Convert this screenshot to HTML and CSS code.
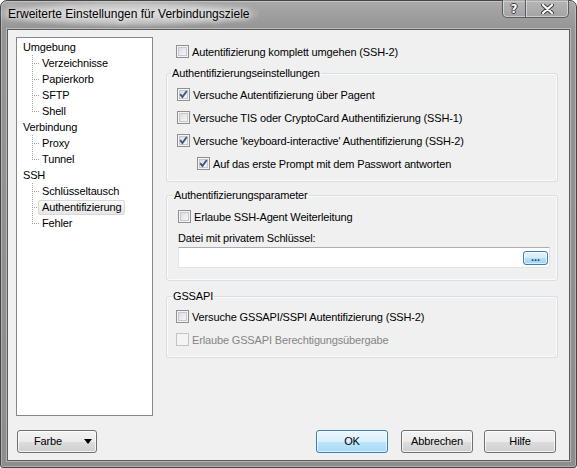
FILE: index.html
```html
<!DOCTYPE html>
<html lang="de">
<head>
<meta charset="utf-8">
<title>Erweiterte Einstellungen für Verbindungsziele</title>
<link rel="stylesheet" href="styles.css">
</head>
<body>
<div class="window">
  <div class="titlebar">
    <span class="title">Erweiterte Einstellungen für Verbindungsziele</span>
    <div class="caption-buttons">
      <span class="cap help">?</span>
      <span class="cap close"><svg width="13" height="10" viewBox="0 0 13 10"><path d="M2 1 L11 9 M11 1 L2 9" stroke="#3a3a3a" stroke-width="4" stroke-linecap="round"/><path d="M2 1 L11 9 M11 1 L2 9" stroke="#fff" stroke-width="2.2" stroke-linecap="round"/></svg></span>
    </div>
  </div>
  <div class="client">
    <div class="main">
      <ul class="tree">
        <li class="root">Umgebung</li>
        <li class="child">Verzeichnisse</li>
        <li class="child">Papierkorb</li>
        <li class="child">SFTP</li>
        <li class="child last">Shell</li>
        <li class="root">Verbindung</li>
        <li class="child">Proxy</li>
        <li class="child last">Tunnel</li>
        <li class="root">SSH</li>
        <li class="child">Schlüsseltausch</li>
        <li class="child"><span class="sel">Authentifizierung</span></li>
        <li class="child last">Fehler</li>
      </ul>
      <div class="panel">
        <div class="row top-row"><span class="cb"></span>Autentifizierung komplett umgehen (SSH-2)</div>
        <fieldset class="group g1">
          <legend>Authentifizierungseinstellungen</legend>
          <div class="row"><span class="cb"><svg width="11" height="11" viewBox="0 0 11 11"><polyline points="2.2,5.2 4.4,8 8.8,2" fill="none" stroke="#3b5486" stroke-width="1.9"/></svg></span>Versuche Autentifizierung über Pagent</div>
          <div class="row"><span class="cb"></span>Versuche TIS oder CryptoCard Authentifizierung (SSH-1)</div>
          <div class="row"><span class="cb"><svg width="11" height="11" viewBox="0 0 11 11"><polyline points="2.2,5.2 4.4,8 8.8,2" fill="none" stroke="#3b5486" stroke-width="1.9"/></svg></span>Versuche 'keyboard-interactive' Authentifizierung (SSH-2)</div>
          <div class="row sub"><span class="cb"><svg width="11" height="11" viewBox="0 0 11 11"><polyline points="2.2,5.2 4.4,8 8.8,2" fill="none" stroke="#3b5486" stroke-width="1.9"/></svg></span>Auf das erste Prompt mit dem Passwort antworten</div>
        </fieldset>
        <fieldset class="group g2">
          <legend>Authentifizierungsparameter</legend>
          <div class="row"><span class="cb"></span>Erlaube SSH-Agent Weiterleitung</div>
          <div class="field-label">Datei mit privatem Schlüssel:</div>
          <div class="edit"><span class="edit-fill"></span><span class="browse">...</span></div>
        </fieldset>
        <fieldset class="group g3">
          <legend>GSSAPI</legend>
          <div class="row"><span class="cb"></span>Versuche GSSAPI/SSPI Autentifizierung (SSH-2)</div>
          <div class="row disabled"><span class="cb"></span>Erlaube GSSAPI Berechtigungsübergabe</div>
        </fieldset>
      </div>
    </div>
    <div class="buttons">
      <span class="btn farbe"><span>Farbe</span><span class="arrow"></span></span>
      <span class="spacer"></span>
      <span class="btn default ok">OK</span>
      <span class="btn cancel">Abbrechen</span>
      <span class="btn hilfe">Hilfe</span>
    </div>
  </div>
</div>
</body>
</html>
```
FILE: styles.css
```css
* { box-sizing: border-box; }
html, body { margin: 0; padding: 0; }
body {
  width: 577px;
  height: 468px;
  overflow: hidden;
  background: #ffffff;
  font-family: "Liberation Sans", Arial, sans-serif;
  font-size: 11px;
  color: #000;
}
.window {
  width: 577px;
  height: 468px;
  border: 1px solid #454545;
  border-radius: 7px 7px 3px 3px;
  background: linear-gradient(to bottom, #a9a9a9 0, #959595 28px, #8d8d8d 100%);
  box-shadow: inset 0 0 0 1px rgba(255,255,255,0.3);
  display: flex;
  flex-direction: column;
}
.titlebar {
  height: 28px;
  flex: none;
  display: flex;
  justify-content: space-between;
  align-items: flex-start;
  padding: 0 7px;
}
.title {
  font-size: 12px;
  line-height: 26px;
  color: #000;
  padding: 0 10px;
  margin-left: -10px;
  background: radial-gradient(ellipse at center, rgba(255,255,255,0.55) 0%, rgba(255,255,255,0.35) 50%, rgba(255,255,255,0) 75%);
  text-shadow: 0 0 6px #fff, 0 0 10px #fff;
}
.caption-buttons {
  margin-top: -1px;
  display: flex;
  height: 18px;
  border: 1px solid #5c5c5c;
  border-top: none;
  border-radius: 0 0 5px 5px;
  box-shadow: inset 0 0 0 1px rgba(255,255,255,0.45);
  background: linear-gradient(to bottom, rgba(255,255,255,0.15), rgba(255,255,255,0.05));
}
.cap {
  display: flex;
  align-items: center;
  justify-content: center;
  height: 17px;
}
.cap.help {
  width: 23px;
  border-right: 1px solid #5c5c5c;
  box-shadow: 1px 0 0 rgba(255,255,255,0.45);
  font-family: "DejaVu Sans", sans-serif;
  font-weight: bold;
  font-size: 12px;
  color: #fff;
  text-shadow: 1px 0 0 #333, -1px 0 0 #333, 0 1px 0 #333, 0 -1px 0 #333;
}
.cap.close { width: 42px; }
.client {
  flex: 1;
  margin: 0 6px 6px 6px;
  border: 1px solid #5b5b5b;
  background: #f0f0f0;
  box-shadow: 0 0 0 1px rgba(255,255,255,0.35);
  display: flex;
  flex-direction: column;
  letter-spacing: -0.15px;
}
.main {
  display: flex;
  gap: 13px;
  padding: 7px 0 0 8px;
}
.tree {
  list-style: none;
  margin: 0;
  padding: 1px 0 0 0;
  width: 137px;
  height: 379px;
  border: 1px solid #828790;
  background: #fff;
}
.tree li {
  height: 16px;
  line-height: 16px;
  white-space: nowrap;
}
.tree .root { padding-left: 6px; }
.tree .child {
  padding-left: 25px;
  background-image:
    repeating-linear-gradient(to bottom, #a0a0a0 0 1px, transparent 1px 2px),
    repeating-linear-gradient(to right, #a0a0a0 0 1px, transparent 1px 2px);
  background-size: 1px 100%, 7px 1px;
  background-position: 15px 0, 15px 8px;
  background-repeat: no-repeat;
}
.tree .child.last { background-size: 1px 9px, 7px 1px; }
.tree .sel {
  display: inline-block;
  margin-left: -4px;
  padding: 0 3px;
  height: 15px;
  line-height: 13px;
  border: 1px solid #d9d9d9;
  border-radius: 2px;
  background: linear-gradient(to bottom, #fafafa, #e6e6e6);
  vertical-align: top;
  margin-top: 1px;
}
.panel {
  width: 392px;
  display: flex;
  flex-direction: column;
}
.row {
  display: flex;
  align-items: center;
  height: 23px;
  white-space: nowrap;
}
.top-row { margin-top: 3px; padding-left: 10px; }
.cb {
  width: 13px;
  height: 13px;
  flex: none;
  margin-right: 3px;
  border: 1px solid #8e8f8f;
  background: linear-gradient(135deg, #d2d5da 0%, #eceef0 60%, #f7f7f7 100%);
  box-shadow: inset 0 0 0 1px #f4f4f4, inset 0 0 0 2px #c5c9ce;
  display: flex;
  align-items: center;
  justify-content: center;
}
.cb svg { display: block; }
.disabled { color: #858585; }
.disabled .cb {
  border-color: #c4c4c4;
  background: #f4f4f4;
  box-shadow: none;
}
.group {
  margin: 0;
  border: 1px solid #d5dfe5;
  border-radius: 3px;
  box-shadow: inset 0 0 0 1px #fbfbfb;
  min-width: 0;
}
.group legend {
  padding: 0 1px;
  line-height: 13px;
  height: 13px;
}
.g1 { margin-top: 4px; padding: 3px 7px 6px 10px; }
.g1 legend { margin-left: -6px; }
.g2 { margin-top: 7px; padding: 3px 7px 12px 11px; }
.g2 legend { margin-left: -5px; }
.g3 { margin-top: 9px; padding: 2px 7px 6px 9px; }
.g3 legend { margin-left: -4px; }
.row.sub { padding-left: 20px; }
.field-label {
  margin-top: 3px;
  line-height: 14px;
  height: 14px;
}
.edit {
  margin-top: 2px;
  height: 21px;
  width: 372px;
  border: 1px solid #e2e3ea;
  border-top-color: #abadb3;
  background: #fff;
  display: flex;
  align-items: center;
  padding-right: 1px;
}
.edit-fill { flex: 1; }
.browse {
  width: 25px;
  height: 14px;
  border: 1px solid #3c7fb1;
  border-radius: 3px;
  background: linear-gradient(to bottom, #e5f4fc 0%, #d1ecfb 50%, #b6e0f8 50%, #a2d4f3 100%);
  box-shadow: inset 0 0 0 1px rgba(255,255,255,0.6);
  font-size: 11px;
  line-height: 10px;
  text-align: center;
  color: #1e3f66;
  font-weight: bold;
  letter-spacing: 0;
}
.buttons {
  display: flex;
  align-items: center;
  margin-top: 14px;
  padding: 0 13px 0 9px;
}
.spacer { flex: 1; }
.btn {
  height: 23px;
  width: 72px;
  border: 1px solid #707070;
  border-radius: 3px;
  background: linear-gradient(to bottom, #f2f2f2 0%, #ebebeb 50%, #dddddd 50%, #cfcfcf 100%);
  box-shadow: inset 0 0 0 1px rgba(255,255,255,0.75);
  display: flex;
  align-items: center;
  justify-content: center;
  line-height: 21px;
}
.btn.farbe {
  width: 80px;
  justify-content: flex-start;
  padding: 0 4px 0 16px;
}
.arrow {
  margin-left: auto;
  width: 0;
  height: 0;
  border-left: 4px solid transparent;
  border-right: 4px solid transparent;
  border-top: 5px solid #000;
}
.btn.default {
  border-color: #3c7fb1;
  background: linear-gradient(to bottom, #eaf6fd 0%, #d9f0fc 50%, #bee6fd 50%, #a7d9f5 100%);
  box-shadow: inset 0 0 0 1px rgba(255,255,255,0.6);
}
.btn.ok { margin-right: 13px; }
.btn.cancel { margin-right: 11px; }
```
